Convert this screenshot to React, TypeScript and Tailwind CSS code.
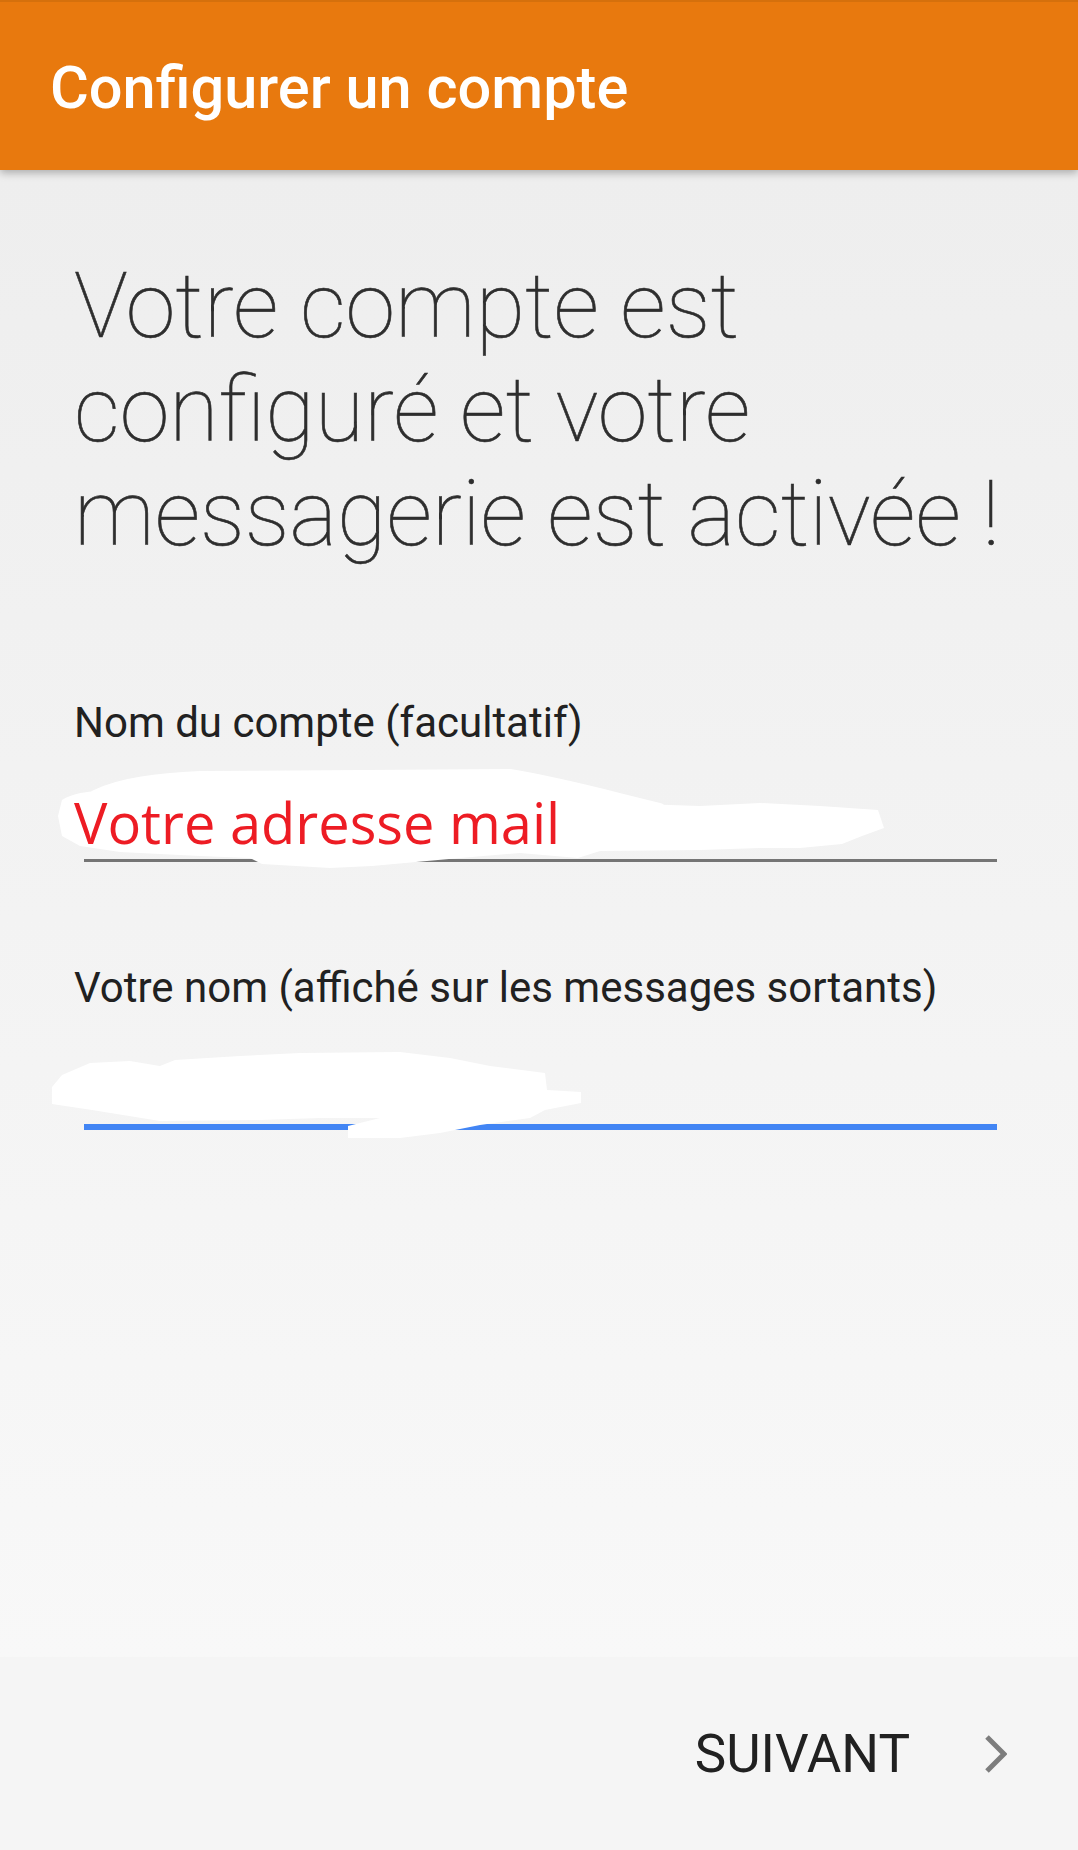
import React from "react";

export default function App() {
  return (
    <div className="w-[1078px] min-h-[1850px] flex flex-col bg-[#eeeeee] font-['Roboto',sans-serif]">
      <header className="relative z-20 h-[170px] shrink-0 bg-[#e8790e] border-t-2 border-[#d5700c] shadow-[0_3px_8px_rgba(0,0,0,0.28)] flex items-center pl-[50px] pt-[4px]">
        <h1 className="text-[59.5px] leading-[70px] font-medium text-white">Configurer un compte</h1>
      </header>

      <main className="relative flex-1 h-[1487px] bg-gradient-to-b from-[#eeeeee] to-[#f8f8f8] pl-[74px] flex flex-col">
        <h2 className="mt-[85px] text-[90px] leading-[104px] font-thin text-[#2e2e2e] whitespace-nowrap [-webkit-text-stroke:0.6px_#2e2e2e]">
          Votre compte est
          <br />
          configuré et votre
          <br />
          messagerie est activée !
        </h2>

        <label className="mt-[131px] text-[42px] leading-[50px] text-[#212121]">Nom du compte (facultatif)</label>
        <div className="relative z-10 mt-[36px] h-[76px] text-[56px] leading-[76px] text-[#ed1c24] font-['Open_Sans',sans-serif]">
          Votre adresse mail
        </div>
        <div className="mt-[-1px] ml-[10px] w-[913px] h-[3px] bg-[#757575]" />

        <label className="mt-[101px] text-[42px] leading-[50px] text-[#212121]">Votre nom (affiché sur les messages sortants)</label>
        <div className="mt-[111px] ml-[10px] w-[913px] h-[6px] bg-[#4285f4]" />

        <svg
          className="absolute left-0 top-0 w-[1078px] h-[1487px] pointer-events-none"
          viewBox="0 170 1078 1487"
          aria-hidden="true"
        >
          <path
            fill="#ffffff"
            d="M62 800 C75 792 95 790 110 792 C130 786 150 782 180 779 L300 776 L520 776 C560 784 600 796 640 804 L700 806 L760 803 L820 806 L878 810 L884 828 L862 836 L842 844 L800 848 L760 848 L700 850 L600 851 L578 858 L520 853 L460 858 L372 866 L330 868 L262 864 L250 858 L200 856 L120 852 L80 846 L62 836 L58 816 Z"
          />
          <path
            fill="none"
            stroke="#ffffff"
            strokeWidth="10"
            strokeLinecap="round"
            d="M95 795 C120 782 160 778 200 776 L510 774 C560 782 610 796 660 808"
          />
          <path
            fill="#ffffff"
            d="M52 1087 L62 1075 L90 1063 L130 1061 L160 1066 L175 1060 L240 1056 L300 1053 L400 1052 L450 1058 L490 1066 L545 1073 L547 1090 L581 1092 L581 1103 L545 1110 L530 1118 L480 1125 L440 1133 L400 1138 L348 1138 L348 1126 L380 1118 L320 1118 L260 1120 L160 1121 L92 1110 L52 1104 Z"
          />
        </svg>
      </main>

      <footer className="h-[193px] shrink-0 bg-[#f5f5f5] flex items-center justify-end pr-[71px]">
        <span className="text-[53px] leading-[62px] text-[#212121]">SUIVANT</span>
        <svg className="ml-[75px] w-[22px] h-[38px]" viewBox="0 0 22 38" aria-hidden="true">
          <polyline points="2,2 19,19 2,36" fill="none" stroke="#7d7d7d" strokeWidth="5" />
        </svg>
      </footer>
    </div>
  );
}
